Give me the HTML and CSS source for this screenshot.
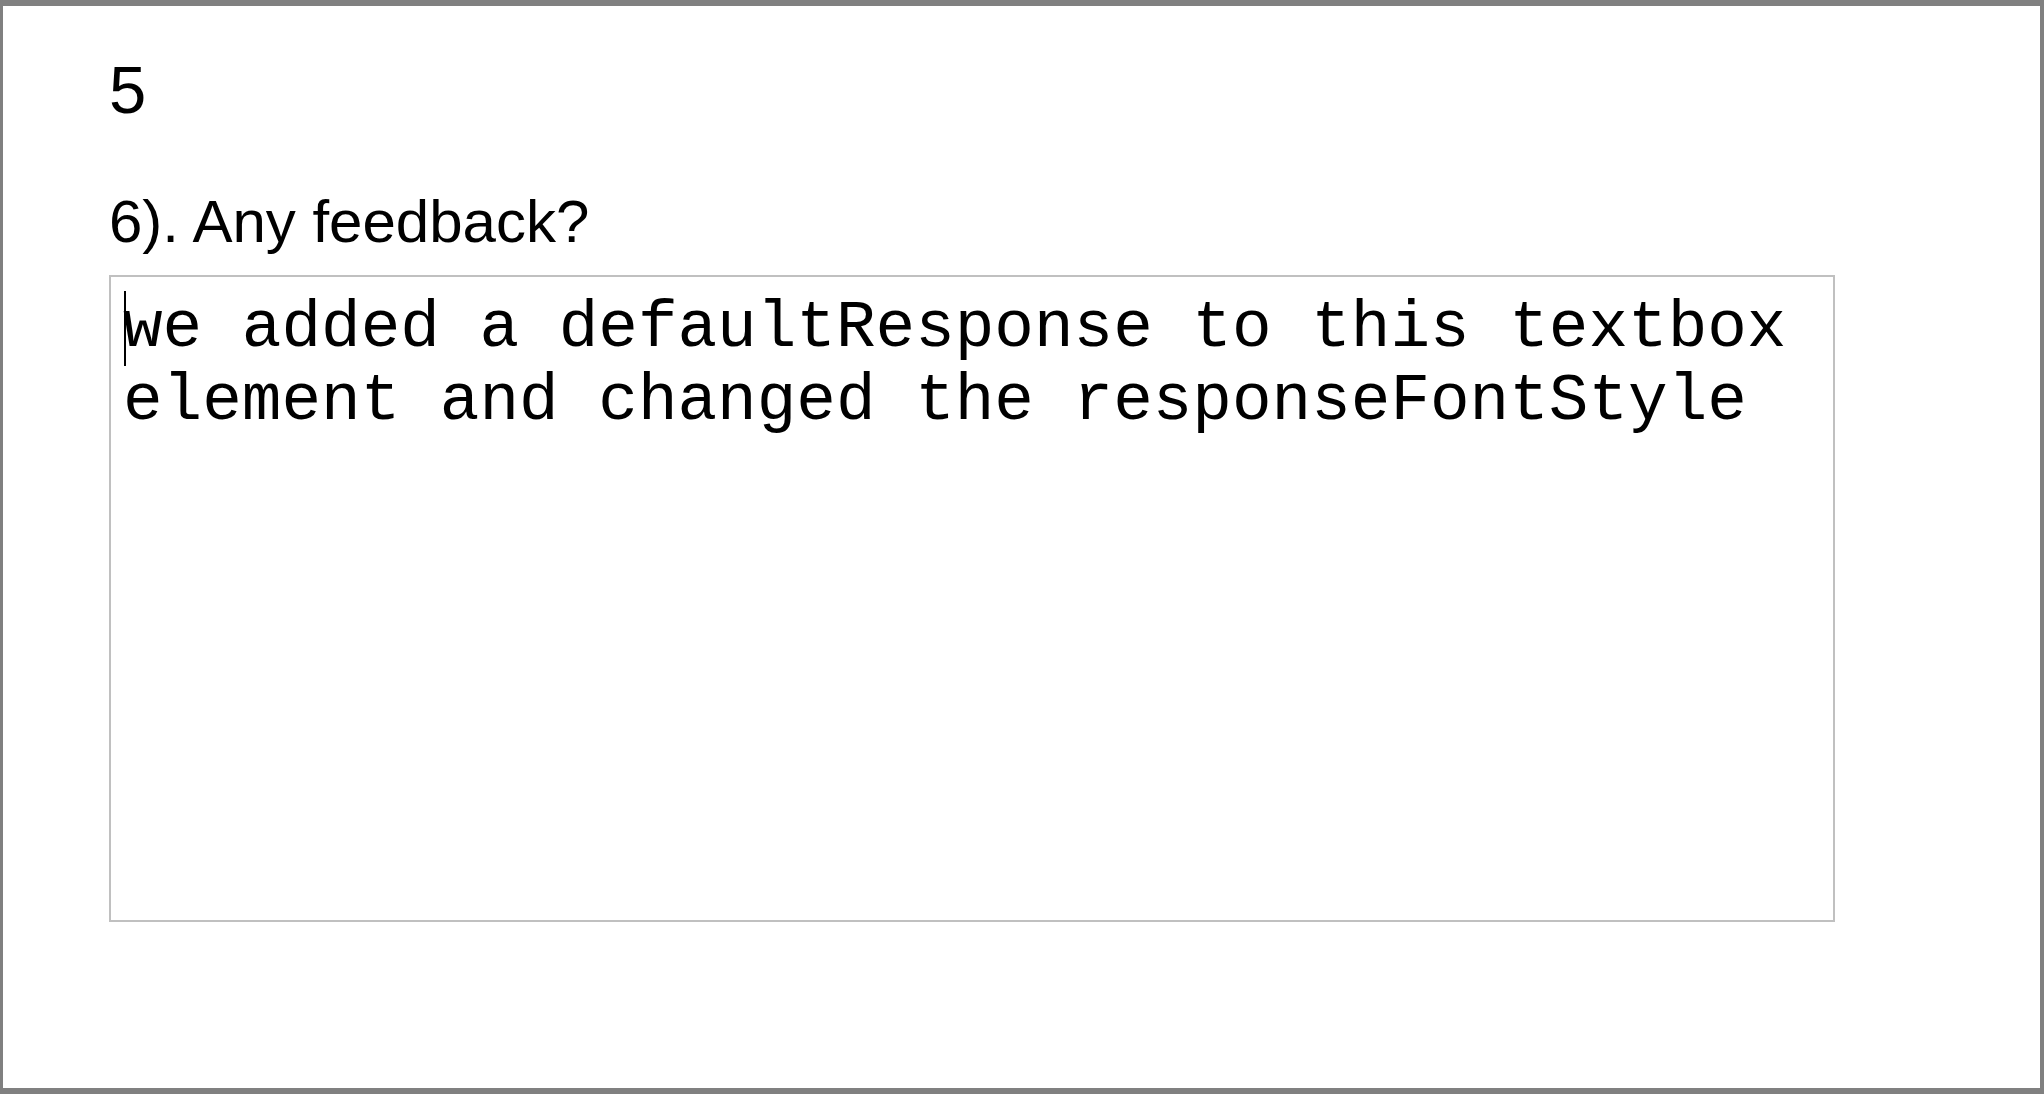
FILE: index.html
```html
<!DOCTYPE html>
<html>
<head>
<meta charset="utf-8">
<link rel="stylesheet" href="styles.css">
</head>
<body>
<div class="frame">
  <div class="content">
    <div class="answer">5</div>
    <div class="question">6). Any feedback?</div>
    <div class="textbox"><span class="caret"></span>we added a defaultResponse to this textbox element and changed the responseFontStyle</div>
  </div>
</div>
</body>
</html>
```
FILE: styles.css
```css
html, body {
  margin: 0;
  padding: 0;
  background: #ffffff;
}
.frame {
  box-sizing: border-box;
  height: 1094px;
  border-style: solid;
  border-color: #808080;
  border-width: 6px 4px 6px 3px;
  background: #ffffff;
}
.content {
  padding: 46px 0 0 106px;
  font-family: "Liberation Sans", Arial, sans-serif;
  color: #000000;
}
.answer {
  font-size: 67px;
  line-height: 76px;
}
.question {
  font-size: 60px;
  line-height: 68px;
  margin-top: 60px;
}
.textbox {
  position: relative;
  box-sizing: border-box;
  width: 1726px;
  height: 647px;
  margin-top: 19px;
  border: 2px solid #c0c0c0;
  padding: 15px 12px 0 12px;
  font-family: "Courier New", "Nimbus Mono PS", "Nimbus Mono L", "FreeMono", "Liberation Mono", monospace;
  font-size: 66px;
  line-height: 73px;
  color: #000000;
}
.caret {
  position: absolute;
  left: 13px;
  top: 14px;
  width: 2px;
  height: 75px;
  background: #000000;
}
```
